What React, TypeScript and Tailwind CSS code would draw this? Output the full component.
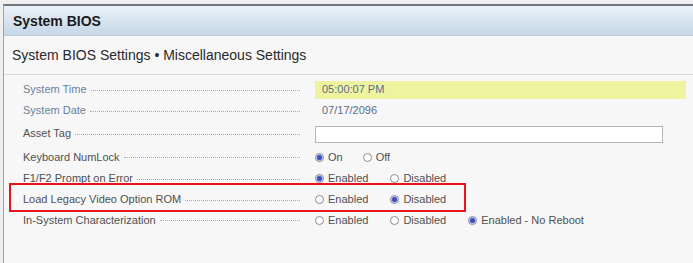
import React from "react";

const font = { fontFamily: '"Liberation Sans", Arial, sans-serif' };

function Radio({ checked }: { checked?: boolean }) {
  return (
    <span className="relative inline-flex h-[9px] w-[9px] shrink-0 items-center justify-center rounded-full border border-[#8a8a8a] bg-white">
      {checked && <span className="h-[5px] w-[5px] rounded-full bg-[#3f4fb8] shadow-[0_0_2px_1px_#9aa6e6]" />}
    </span>
  );
}

function Option({ label, checked }: { label: string; checked?: boolean }) {
  return (
    <span className="flex items-center gap-[4px]">
      <Radio checked={checked} />
      <span>{label}</span>
    </span>
  );
}

function Label({ text, blue }: { text: string; blue?: boolean }) {
  return (
    <div className="flex w-[277px] items-center">
      <span className={blue ? "text-[#6a7f9c]" : "text-[#505050]"}>{text}</span>
      <span className="ml-[4px] mt-[1px] h-0 flex-1 border-b border-dotted border-[#ababab]" />
    </div>
  );
}

function Row({ h, children }: { h: string; children: React.ReactNode }) {
  return <div className={`flex items-center gap-[15px] ${h}`}>{children}</div>;
}

export default function App() {
  return (
    <div className="relative h-[263px] w-[693px] overflow-hidden bg-[#efefef] pl-[3px] pt-[4px]" style={font}>
      <div className="h-full border-l border-t-2 border-l-[#a4a4a4] border-t-[#6e7782] bg-[#f7f7f7]">
        <div className="flex h-[30px] items-center border-b border-[#c0ccd8] bg-gradient-to-b from-[#eaf1f8] to-[#c6d7e7] pl-[9px] pt-[2px] text-[14px] font-bold text-[#1a1a1a]">
          System BIOS
        </div>
        <div className="flex h-[39px] items-center border-b border-[#d8d8d8] pl-[8px] pt-[1px] text-[14px] text-[#2a2a2a]">
          System BIOS Settings • Miscellaneous Settings
        </div>
        <div className="pl-[19px] text-[11px] text-[#505050]">
          <div className="h-[4px]" />
          <Row h="h-[21px]">
            <Label text="System Time" blue />
            <div className="flex h-[18px] w-[371px] items-center bg-[#eef3a0] pl-[7px] text-[#5a6d8c]">05:00:07 PM</div>
          </Row>
          <Row h="h-[21px]">
            <Label text="System Date" blue />
            <div className="pl-[7px] text-[#5a6d8c]">07/17/2096</div>
          </Row>
          <Row h="h-[25px]">
            <Label text="Asset Tag" />
            <div className="mt-[2px] h-[17px] w-[348px] border border-[#b4b4b4] bg-white" />
          </Row>
          <Row h="h-[22px]">
            <Label text="Keyboard NumLock" />
            <div className="flex gap-[20px]">
              <Option label="On" checked />
              <Option label="Off" />
            </div>
          </Row>
          <Row h="h-[21px]">
            <Label text="F1/F2 Prompt on Error" />
            <div className="flex gap-[22px]">
              <Option label="Enabled" checked />
              <Option label="Disabled" />
            </div>
          </Row>
          <Row h="h-[21px]">
            <Label text="Load Legacy Video Option ROM" />
            <div className="flex gap-[22px]">
              <Option label="Enabled" />
              <Option label="Disabled" checked />
            </div>
          </Row>
          <Row h="h-[20px]">
            <Label text="In-System Characterization" />
            <div className="flex gap-[22px]">
              <Option label="Enabled" />
              <Option label="Disabled" />
              <Option label="Enabled - No Reboot" checked />
            </div>
          </Row>
        </div>
      </div>
      <div className="absolute left-[9px] top-[183px] h-[29px] w-[457px] border-2 border-[#e8141b]" />
    </div>
  );
}
